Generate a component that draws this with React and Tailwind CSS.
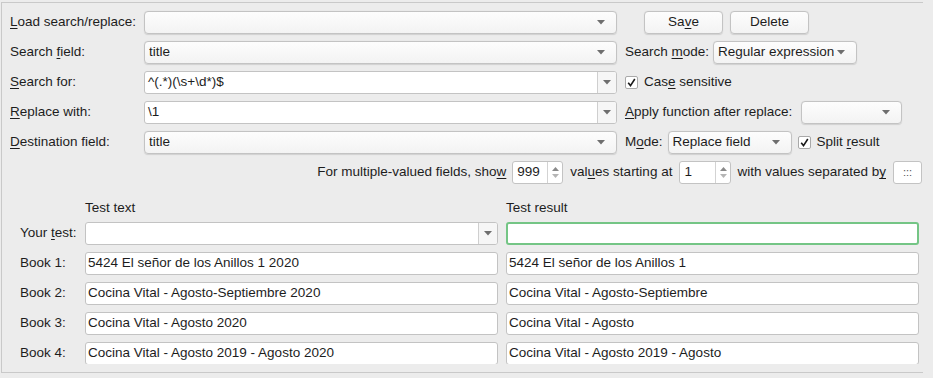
import React from 'react';

const font = { fontFamily: '"Liberation Sans", Arial, sans-serif' };

function Arrow() {
  return (
    <svg width="8" height="5" viewBox="0 0 8 5" className="shrink-0">
      <path d="M0 0 L8 0 L4 4.5 Z" fill="#6e6e6e" />
    </svg>
  );
}

function Combo({ value = '', className = '' }) {
  return (
    <div className={`h-[23px] flex items-center justify-between pl-[4px] pr-[11px] rounded-[4px] border border-[#c3c3c3] bg-gradient-to-b from-[#fdfdfd] to-[#f3f3f3] shadow-[0_0.5px_1px_rgba(0,0,0,0.12)] ${className}`}>
      <span className="truncate">{value}</span>
      <Arrow />
    </div>
  );
}

function EditCombo({ value = '', className = '' }) {
  return (
    <div className={`h-[23px] flex items-stretch rounded-[3px] border border-[#c3c3c3] bg-white overflow-hidden ${className}`}>
      <div className="flex-1 flex items-center pl-[3px] truncate">{value}</div>
      <div className="w-[19px] flex items-center justify-center border-l border-[#cfcfcf] bg-[#f6f6f6]">
        <Arrow />
      </div>
    </div>
  );
}

function Field({ value = '', className = '' }) {
  return (
    <div className={`h-[23px] flex items-center pl-[2px] rounded-[3px] border border-[#c3c3c3] bg-white truncate ${className}`}>
      {value}
    </div>
  );
}

function Spin({ value, className = '' }) {
  return (
    <div className={`h-[23px] flex items-stretch rounded-[3px] border border-[#c3c3c3] bg-white ${className}`}>
      <div className="flex-1 flex items-center pl-[4px]">{value}</div>
      <div className="w-[15px] flex flex-col items-center justify-center gap-[3px] border-l border-[#d3d3d3]">
        <svg width="7" height="4" viewBox="0 0 7 4"><path d="M0 4 L3.5 0 L7 4 Z" fill="#8a8a8a" /></svg>
        <svg width="7" height="4" viewBox="0 0 7 4"><path d="M0 0 L7 0 L3.5 4 Z" fill="#b5b5b5" /></svg>
      </div>
    </div>
  );
}

function Check({ label }) {
  return (
    <div className="flex items-center gap-[6px]">
      <div className="w-[13px] h-[13px] rounded-[2px] border border-[#a9a9a9] bg-white flex items-center justify-center">
        <svg width="9" height="9" viewBox="0 0 9 9">
          <path d="M1.2 4.8 L3.5 7.6 L7.8 1" fill="none" stroke="#1a1a1a" strokeWidth="1.6" />
        </svg>
      </div>
      <span>{label}</span>
    </div>
  );
}

function Button({ children }) {
  return (
    <div className="w-[79px] h-[23px] flex items-center justify-center rounded-[4px] border border-[#c3c3c3] bg-gradient-to-b from-[#fdfdfd] to-[#f3f3f3] shadow-[0_0.5px_1px_rgba(0,0,0,0.12)]">
      {children}
    </div>
  );
}

const U = ({ children }) => <u className="underline-offset-2">{children}</u>;

export default function App() {
  const books = [
    ['Book 1:', '5424 El señor de los Anillos 1 2020', '5424 El señor de los Anillos 1'],
    ['Book 2:', 'Cocina Vital - Agosto-Septiembre 2020', 'Cocina Vital - Agosto-Septiembre'],
    ['Book 3:', 'Cocina Vital - Agosto 2020', 'Cocina Vital - Agosto'],
    ['Book 4:', 'Cocina Vital - Agosto 2019 - Agosto 2020', 'Cocina Vital - Agosto 2019 - Agosto'],
  ];

  return (
    <div style={font} className="w-[933px] h-[378px] bg-[#ececec] text-[13.5px] text-[#1d1d1d] overflow-hidden pt-[2px] pl-[1px]">
      <div className="w-[922px] h-[371px] border-t border-l border-b border-[#c9c9c9] pt-[8px] pl-[8px] flex flex-col">
        <div className="flex flex-col gap-[7px]">
          <div className="flex items-center">
            <span className="w-[134px]"><U>L</U>oad search/replace:</span>
            <Combo className="w-[473px]" />
            <div className="flex gap-[7px] ml-[27px]">
              <Button>Sa<U>v</U>e</Button>
              <Button>Delete</Button>
            </div>
          </div>
          <div className="flex items-center">
            <span className="w-[134px]">Search <U>f</U>ield:</span>
            <Combo className="w-[473px]" value="title" />
            <span className="ml-[8px]">Search <U>m</U>ode:</span>
            <Combo className="w-[144px] ml-[4px]" value="Regular expression" />
          </div>
          <div className="flex items-center">
            <span className="w-[134px]"><U>S</U>earch for:</span>
            <EditCombo className="w-[473px]" value="^(.*)(\s+\d*)$" />
            <div className="ml-[8px]">
              <Check label={<>Cas<U>e</U> sensitive</>} />
            </div>
          </div>
          <div className="flex items-center">
            <span className="w-[134px]"><U>R</U>eplace with:</span>
            <EditCombo className="w-[473px]" value="\1" />
            <span className="ml-[8px]"><U>A</U>pply function after replace:</span>
            <Combo className="w-[101px] ml-[9px]" />
          </div>
          <div className="flex items-center">
            <span className="w-[134px]"><U>D</U>estination field:</span>
            <Combo className="w-[473px]" value="title" />
            <span className="ml-[8px]">M<U>o</U>de:</span>
            <Combo className="w-[124px] ml-[5px]" value="Replace field" />
            <div className="ml-[6px]">
              <Check label={<>Split <U>r</U>esult</>} />
            </div>
          </div>
          <div className="flex items-center justify-end pr-[1px]">
            <span>For multiple-valued fields, sho<U>w</U></span>
            <Spin className="w-[51px] ml-[6px]" value="999" />
            <span className="ml-[7px]">val<U>u</U>es starting at</span>
            <Spin className="w-[52px] ml-[7px]" value="1" />
            <span className="ml-[6px]">with values separated b<U>y</U></span>
            <div className="ml-[7px] w-[29px] h-[23px] rounded-[3px] border border-[#c3c3c3] bg-white flex items-center justify-center text-[11px] text-[#555]">:::</div>
          </div>
        </div>

        <div className="flex mt-[16px] pl-[75px] leading-[16px]">
          <span className="w-[421px]">Test text</span>
          <span>Test result</span>
        </div>

        <div className="mt-[6px] h-[142px] overflow-hidden flex flex-col gap-[7px] pl-[10px]">
          <div className="flex items-center">
            <span className="w-[65px]">Your <U>t</U>est:</span>
            <EditCombo className="w-[413px]" />
            <div className="ml-[8px] w-[413px] h-[23px] rounded-[3px] border-[2.5px] border-[#74c585] bg-white" />
          </div>
          {books.map(([label, a, b]) => (
            <div key={label} className="flex items-center">
              <span className="w-[65px]">{label}</span>
              <Field className="w-[413px]" value={a} />
              <Field className="w-[413px] ml-[8px]" value={b} />
            </div>
          ))}
        </div>
      </div>
    </div>
  );
}
